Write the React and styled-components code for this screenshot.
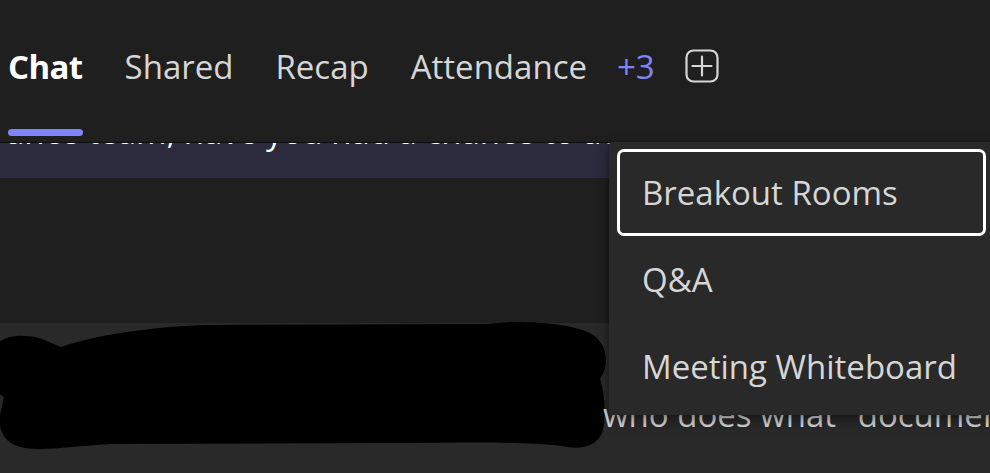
import React from 'react';
import styled, { createGlobalStyle } from 'styled-components';

const GlobalStyle = createGlobalStyle`
  html, body {
    margin: 0;
    padding: 0;
    background: #1f1f1f;
  }

  * {
    box-sizing: border-box;
  }
`;

const Screen = styled.div`
  position: relative;
  width: 990px;
  height: 473px;
  overflow: hidden;
  display: flex;
  flex-direction: column;
  background: #1f1f1f;
  font-family: 'Open Sans', 'Noto Sans', sans-serif;
  font-size: 33px;
  line-height: 40px;
  color: #d6d6d6;
`;

const TabBar = styled.div`
  display: flex;
  align-items: stretch;
  gap: 42px;
  height: 143px;
  padding-left: 8px;
  background: #1f1f1f;
  border-bottom: 1px solid #0e0e0e;
  flex-shrink: 0;
`;

const Tab = styled.div`
  display: flex;
  flex-direction: column;
  padding-top: 47px;
  font-weight: ${({ $active }) => ($active ? 700 : 400)};
  letter-spacing: ${({ $active }) => ($active ? '-0.6px' : '0')};
  color: ${({ $active }) => ($active ? '#ffffff' : '#d6d6d6')};
  white-space: nowrap;
`;

const Underline = styled.div`
  margin-top: auto;
  margin-bottom: 6px;
  height: 7px;
  border-radius: 4px;
  background: ${({ $active }) => ($active ? '#7f85f5' : 'transparent')};
`;

const MoreCount = styled.div`
  padding-top: 47px;
  margin-left: -12px;
  color: #7f85f5;
`;

const AddButton = styled.div`
  padding-top: 49px;
  margin-left: -12px;

  svg {
    display: block;
  }
`;

const Conversation = styled.div`
  flex: 1;
  display: flex;
  flex-direction: column;
  overflow: hidden;
`;

const HighlightedMessage = styled.div`
  height: 35px;
  flex-shrink: 0;
  overflow: hidden;
  background: #2c2b3e;
  padding-left: 6px;
`;

const ScrolledLine = styled.div`
  margin-top: -31px;
  color: #ffffff;
  white-space: nowrap;
`;

const Spacer = styled.div`
  height: 145px;
  flex-shrink: 0;
`;

const Message = styled.div`
  flex: 1;
  display: flex;
  align-items: flex-start;
  background: #292929;
`;

const Redaction = styled.svg`
  flex-shrink: 0;
  display: block;
  overflow: visible;
`;

const MessageText = styled.div`
  margin-top: 72px;
  white-space: nowrap;
  color: #d6d6d6;
`;

const Menu = styled.div`
  position: absolute;
  left: 609px;
  top: 142px;
  width: 385px;
  padding: 7px 8px 5px;
  background: #292929;
  border-radius: 4px;
  box-shadow: 0 6px 14px rgba(0, 0, 0, 0.35), 0 0 4px rgba(0, 0, 0, 0.3);
  display: flex;
  flex-direction: column;
`;

const MenuItem = styled.div`
  height: 87px;
  display: flex;
  align-items: center;
  padding-left: 22px;
  border: 3px solid ${({ $focused }) => ($focused ? '#ffffff' : 'transparent')};
  border-radius: 7px;
  color: #d6d6d6;
  white-space: nowrap;
`;

const tabs = ['Chat', 'Shared', 'Recap', 'Attendance'];
const menuItems = ['Breakout Rooms', 'Q&A', 'Meeting Whiteboard'];

function PlusSquare() {
  return (
    <svg width="34" height="34" viewBox="0 0 34 34" fill="none" stroke="#d6d6d6" strokeWidth="2.2">
      <rect x="1.5" y="1.5" width="31" height="31" rx="7" />
      <path d="M17 7.5V26.5M7.5 17H26.5" strokeLinecap="round" />
    </svg>
  );
}

export default function App() {
  return (
    <>
      <GlobalStyle />
      <Screen>
        <TabBar>
          {tabs.map((t, i) => (
            <Tab key={t} $active={i === 0}>
              {t}
              <Underline $active={i === 0} />
            </Tab>
          ))}
          <MoreCount>+3</MoreCount>
          <AddButton>
            <PlusSquare />
          </AddButton>
        </TabBar>

        <Conversation>
          <HighlightedMessage>
            <ScrolledLine>ance team, have you had a chance to add your notes</ScrolledLine>
          </HighlightedMessage>
          <Spacer />
          <Message>
            {/* hand-drawn redaction over the sender name */}
            <Redaction width="603" height="130" viewBox="0 0 603 130">
              <path
                fill="#000"
                d="M-6 24 C 2 12, 24 10, 42 16 L 61 24 C 95 12, 150 4, 205 2 L 488 1 C 515 -3, 565 -1, 590 10 C 608 20, 610 42, 600 56 C 606 75, 606 98, 602 110 C 596 124, 580 127, 562 123 C 520 118, 460 120, 400 120 L 110 121 C 75 123, 45 128, 25 125 C 6 122, -2 110, 0 92 L 4 74 L -6 68 Z"
              />
            </Redaction>
            <MessageText>who does what" document</MessageText>
          </Message>
        </Conversation>

        <Menu>
          {menuItems.map((m, i) => (
            <MenuItem key={m} $focused={i === 0}>
              {m}
            </MenuItem>
          ))}
        </Menu>
      </Screen>
    </>
  );
}
